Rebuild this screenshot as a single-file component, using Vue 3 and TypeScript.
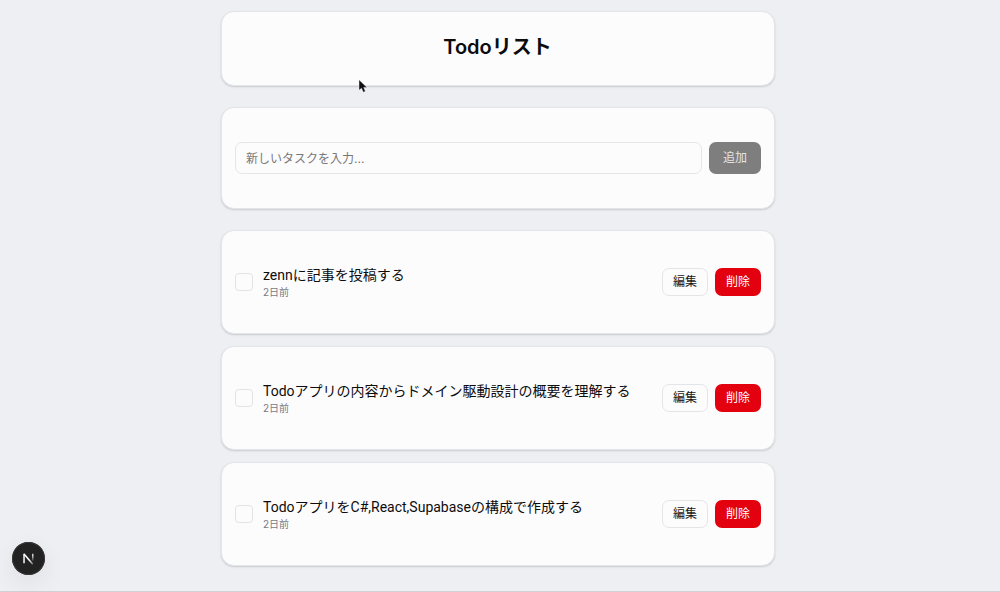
<script setup lang="ts">
import { ref } from 'vue'

interface Todo {
  id: number
  title: string
  age: string
  done: boolean
}

const draft = ref('')
const todos = ref<Todo[]>([
  { id: 1, title: 'zennに記事を投稿する', age: '2日前', done: false },
  { id: 2, title: 'Todoアプリの内容からドメイン駆動設計の概要を理解する', age: '2日前', done: false },
  { id: 3, title: 'TodoアプリをC#,React,Supabaseの構成で作成する', age: '2日前', done: false },
])

function addTodo() {
  const title = draft.value.trim()
  if (!title) return
  todos.value.push({ id: Date.now(), title, age: '今日', done: false })
  draft.value = ''
}

function removeTodo(id: number) {
  todos.value = todos.value.filter((todo) => todo.id !== id)
}
</script>

<template>
  <div class="page">
    <main class="column">
      <header class="card heading">
        <h1>Todoリスト</h1>
      </header>

      <form class="card entry" @submit.prevent="addTodo">
        <input v-model="draft" class="field" type="text" aria-label="新しいタスク" placeholder="新しいタスクを入力..." />
        <button class="btn add" type="submit" :disabled="!draft.trim()">追加</button>
      </form>

      <ul class="list">
        <li v-for="todo in todos" :key="todo.id" class="card item">
          <input :id="`todo-${todo.id}`" v-model="todo.done" class="check" type="checkbox" />
          <div class="body">
            <label class="title" :for="`todo-${todo.id}`">{{ todo.title }}</label>
            <span class="age">{{ todo.age }}</span>
          </div>
          <div class="actions">
            <button class="btn edit" type="button">編集</button>
            <button class="btn remove" type="button" @click="removeTodo(todo.id)">削除</button>
          </div>
        </li>
      </ul>
    </main>

    <button class="devtools" type="button" aria-label="Next.js">
      <svg viewBox="0 0 34 34" width="33" height="33" aria-hidden="true">
        <defs>
          <linearGradient id="diag" x1="15" y1="15" x2="22" y2="24" gradientUnits="userSpaceOnUse">
            <stop offset="0.4" stop-color="#fff" />
            <stop offset="1" stop-color="#fff" stop-opacity="0.2" />
          </linearGradient>
          <linearGradient id="stem" x1="0" y1="12" x2="0" y2="20" gradientUnits="userSpaceOnUse">
            <stop offset="0.3" stop-color="#fff" stop-opacity="0.8" />
            <stop offset="1" stop-color="#fff" stop-opacity="0" />
          </linearGradient>
        </defs>
        <path d="M12.4 12.4L21.4 23" fill="none" stroke="url(#diag)" stroke-width="1.6" />
        <path d="M12.4 22V12" fill="none" stroke="#fff" stroke-width="1.5" />
        <path d="M21.4 12V20" fill="none" stroke="url(#stem)" stroke-width="1.5" />
      </svg>
    </button>

    <svg class="pointer" viewBox="0 0 10 14" width="10" height="14" aria-hidden="true">
      <path d="M1 0.8V11.2L3.5 9.2L5.3 13.2L7.4 12.3L5.7 8.4H9Z" fill="#111" stroke="#fff" stroke-width="0.4" />
    </svg>
  </div>
</template>

<style>
body {
  margin: 0;
  background: #eeeff3;
}
</style>

<style scoped>
.page {
  position: relative;
  box-sizing: border-box;
  min-height: 100vh;
  padding: 11px 16px 24px 12px;
  border-bottom: 1px solid #d0d1d4;
  background: #eeeff3;
  color: #0c0c0e;
  font-family: Inter, "Noto Sans CJK JP", sans-serif;
}

.column {
  display: flex;
  flex-direction: column;
  gap: 21px;
  max-width: 554px;
  margin: 0 auto;
}

.card {
  box-sizing: border-box;
  border: 1px solid #e4e5e9;
  border-radius: 13px;
  background: #fdfcfd;
  box-shadow: 0 1px 2px rgba(0, 0, 0, 0.15);
}

.heading {
  padding: 20px 15px 22px 14px;
}

h1 {
  margin: 0;
  font-size: 20px;
  font-weight: 600;
  line-height: 31px;
  text-align: center;
}

.entry {
  display: flex;
  gap: 7px;
  padding: 34px 13px;
}

.field {
  flex: 1;
  min-width: 0;
  box-sizing: border-box;
  height: 32px;
  padding: 0 10px;
  border: 1px solid #e5e6e9;
  border-radius: 7px;
  background: transparent;
  color: inherit;
  font: inherit;
  font-size: 12px;
}

.field::placeholder {
  color: #77787a;
  opacity: 1;
}

.btn {
  box-sizing: border-box;
  height: 28px;
  padding: 0 10px;
  border: 1px solid transparent;
  border-radius: 7px;
  font: inherit;
  font-size: 12px;
  line-height: 16px;
  white-space: nowrap;
}

.add {
  height: 32px;
  padding: 0 13px;
  background: #171717;
  color: #fff;
}

.add:disabled {
  background: #7e7e7e;
  color: #e4e4e4;
}

.list {
  display: flex;
  flex-direction: column;
  gap: 12px;
  margin: 0;
  padding: 0;
  list-style: none;
}

.item {
  display: flex;
  align-items: center;
  gap: 10px;
  padding: 34px 13px;
}

.check {
  appearance: none;
  flex: none;
  box-sizing: border-box;
  width: 18px;
  height: 18px;
  margin: 0;
  border: 1px solid #e2e3e5;
  border-radius: 4px;
}

.check:checked {
  background: #171717;
}

.body {
  display: flex;
  flex: 1;
  flex-direction: column;
  min-width: 0;
}

.title {
  font-family: Roboto, "Noto Sans CJK JP", sans-serif;
  font-size: 14px;
  line-height: 20px;
}

.age {
  color: #777b87;
  font-size: 10px;
  line-height: 14px;
}

.actions {
  display: flex;
  gap: 7px;
}

.edit {
  border-color: #e4e5e7;
  background: #fdfcfd;
  color: #171717;
}

.remove {
  background: #e3000f;
  color: #fff;
}

.devtools {
  position: fixed;
  bottom: 17px;
  left: 12px;
  display: flex;
  padding: 0;
  border: 0;
  border-radius: 50%;
  background: #222;
  box-shadow: inset 0 0 0 1px #3a3a3a, 0 8px 24px rgba(0, 0, 0, 0.07);
}

.pointer {
  position: absolute;
  top: 79px;
  left: 358px;
  pointer-events: none;
}
</style>
